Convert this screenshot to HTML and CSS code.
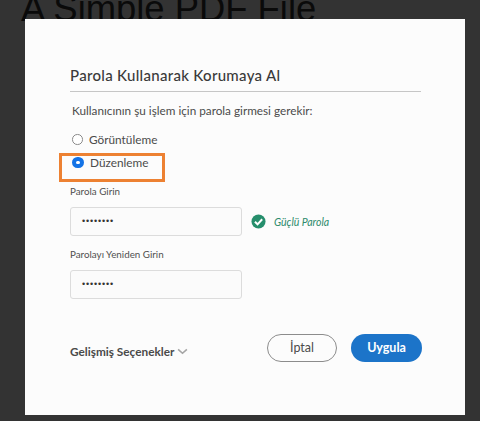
FILE: index.html
```html
<!DOCTYPE html>
<html lang="tr">
<head>
<meta charset="utf-8">
<title>Parola Kullanarak Korumaya Al</title>
<link rel="stylesheet" href="styles.css">
</head>
<body>
<h1 class="doc-title">A Simple PDF File</h1>
<main class="modal">
  <h2 class="modal-title">Parola Kullanarak Korumaya Al</h2>
  <p class="intro">Kullanıcının şu işlem için parola girmesi gerekir:</p>
  <div class="options">
    <div class="option"><span class="radio"></span><span>Görüntüleme</span></div>
    <div class="option"><span class="radio radio-on"></span><span>Düzenleme</span></div>
    <div class="highlight"></div>
  </div>
  <div class="field-label first">Parola Girin</div>
  <div class="field-row">
    <div class="input">••••••••</div>
    <svg class="check" viewBox="0 0 16 16" width="15" height="15"><circle cx="8" cy="8" r="7.5" fill="#268e6c"/><path d="M4.2 8.2 7 11l4.9-5.4" fill="none" stroke="#fff" stroke-width="2.1"/></svg>
    <span class="strength">Güçlü Parola</span>
  </div>
  <div class="field-label second">Parolayı Yeniden Girin</div>
  <div class="field-row">
    <div class="input">••••••••</div>
  </div>
  <footer class="actions">
    <div class="advanced">Gelişmiş Seçenekler
      <svg viewBox="0 0 12 8" width="11" height="7"><path d="M1 1.5 6 6l5-4.5" fill="none" stroke="#a5a5a5" stroke-width="1.8"/></svg>
    </div>
    <div class="buttons">
      <div class="btn btn-cancel">İptal</div>
      <div class="btn btn-apply">Uygula</div>
    </div>
  </footer>
</main>
</body>
</html>
```
FILE: styles.css
```css
html, body { margin: 0; padding: 0; }
body {
  width: 480px;
  height: 421px;
  background: #333333;
  overflow: hidden;
  font-family: Lato, "Noto Sans", sans-serif;
  color: #4b4b4b;
  position: relative;
}
.doc-title {
  position: absolute;
  left: 21px;
  top: -13px;
  margin: 0;
  font: 400 36.4px/44px "Liberation Sans", sans-serif;
  color: #0a0a0a;
  white-space: nowrap;
}
.modal {
  position: absolute;
  left: 25px;
  top: 19px;
  width: 440px;
  height: 396px;
  box-sizing: border-box;
  padding: 46px 44px 0 45px;
  background: #fcfcfc;
  display: flex;
  flex-direction: column;
}
.modal-title {
  margin: 0;
  font-size: 15px;
  line-height: 20px;
  font-weight: 500;
  letter-spacing: 0.3px;
  color: #3a3a3a;
  padding-bottom: 6px;
  border-bottom: 1px solid #c6c6c6;
}
.intro {
  margin: 10px 0 0 2px;
  font-size: 11.75px;
  line-height: 18px;
}
.options {
  position: relative;
  margin-top: 11px;
  display: flex;
  flex-direction: column;
  gap: 6px;
  padding-left: 2px;
}
.option {
  display: flex;
  align-items: center;
  gap: 6.5px;
  font-size: 11.8px;
  line-height: 17px;
}
.radio {
  width: 8.5px;
  height: 8.5px;
  border: 1.5px solid #8a8a8a;
  border-radius: 50%;
  background: #fff;
  flex: none;
}
.radio-on {
  width: 3.5px;
  height: 3.5px;
  border: 4px solid #1473e6;
  background: #fff;
}
.highlight {
  position: absolute;
  left: -11px;
  top: 22px;
  width: 100px;
  height: 23px;
  border: 3.5px solid #ed8132;
}
.field-label {
  font-size: 9.8px;
  line-height: 14px;
  color: #505050;
}
.first { margin-top: 13px; }
.second { margin-top: 11px; }
.field-row {
  display: flex;
  align-items: center;
  margin-top: 9px;
}
.input {
  width: 172px;
  height: 29px;
  box-sizing: border-box;
  background: #fbfbfb;
  border: 1px solid #dcdcdc;
  border-radius: 3px;
  font-size: 9px;
  letter-spacing: 0.85px;
  line-height: 27px;
  padding-left: 11px;
  color: #333;
  font-family: "Liberation Sans", sans-serif;
}
.check { margin-left: 9px; }
.strength {
  margin-left: 8px;
  font-size: 10.5px;
  font-style: italic;
  color: #2c8a6b;
}
.actions {
  margin-top: 35px;
  margin-right: -1px;
  display: flex;
  align-items: center;
  justify-content: space-between;
}
.advanced {
  font-size: 11.8px;
  font-weight: 700;
  color: #4a4a4a;
  display: flex;
  align-items: center;
  gap: 3px;
  padding-top: 6px;
}
.buttons { display: flex; gap: 14px; }
.btn {
  height: 28px;
  box-sizing: border-box;
  border-radius: 14px;
  font-size: 12.5px;
  text-align: center;
}
.btn-cancel {
  width: 70px;
  border: 1.5px solid #8c8c8c;
  line-height: 25px;
  color: #4b4b4b;
}
.btn-apply {
  width: 71px;
  background: #1c74c9;
  color: #fff;
  font-weight: 700;
  line-height: 28px;
}
```
